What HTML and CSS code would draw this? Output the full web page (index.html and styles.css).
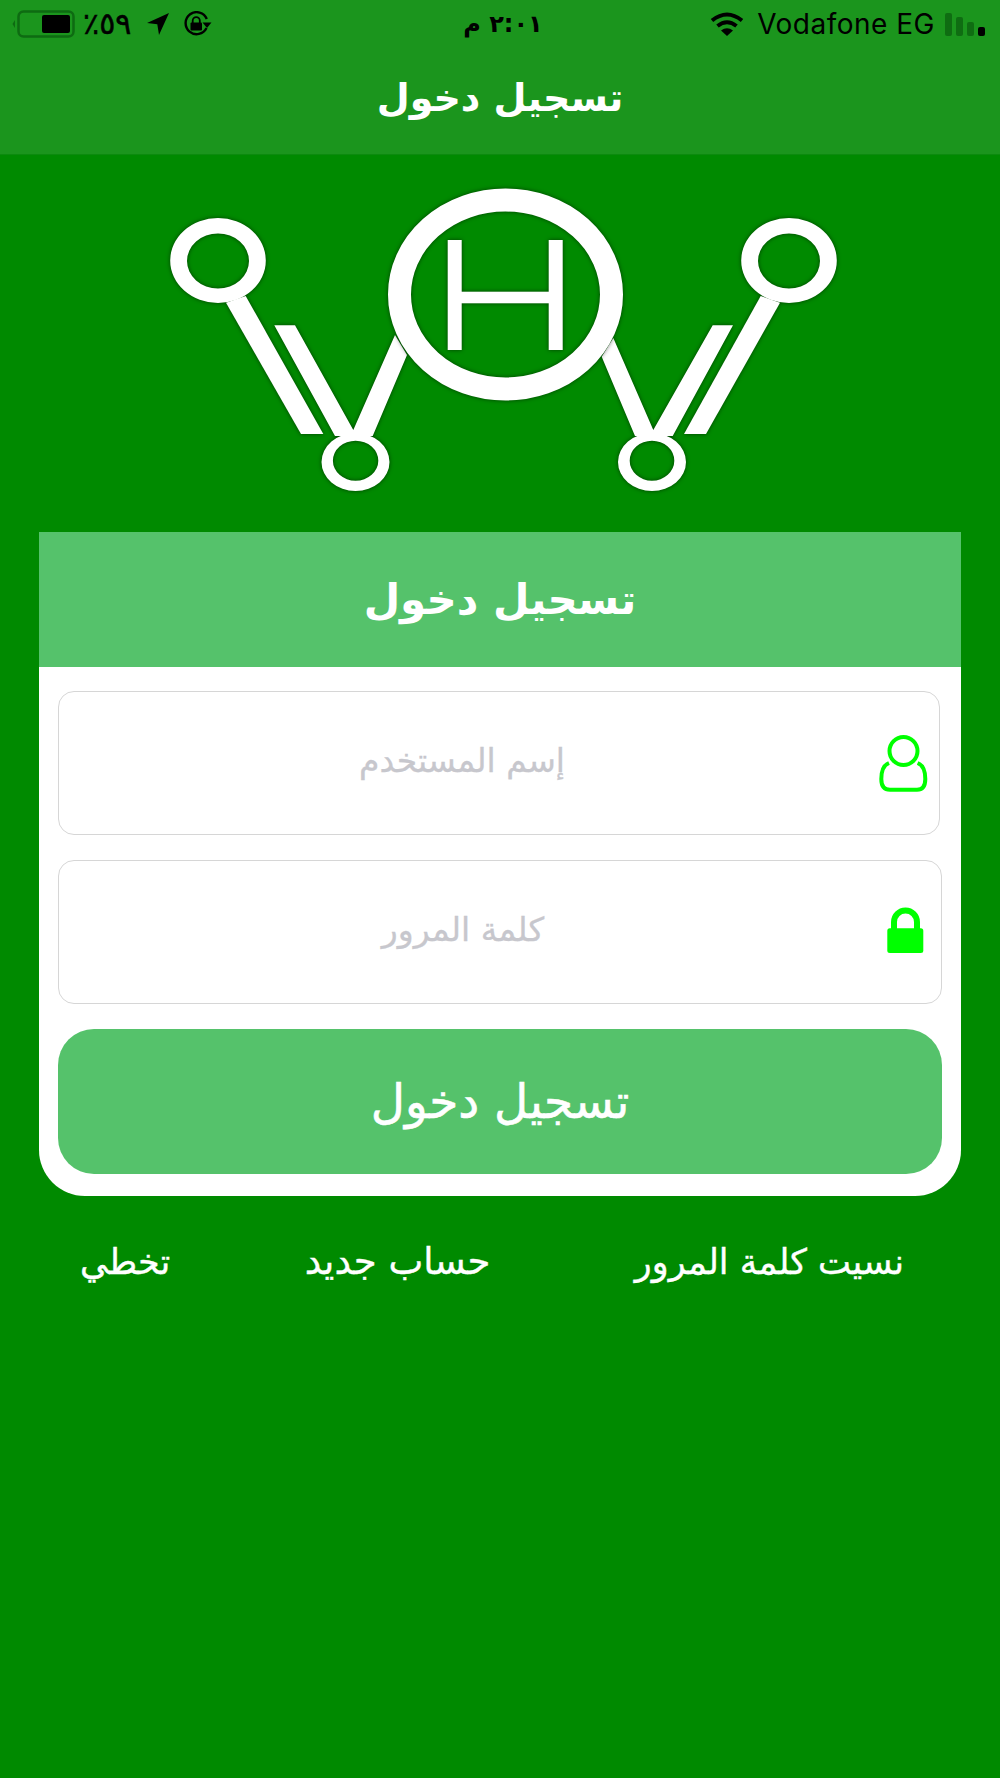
FILE: index.html
```html
<!DOCTYPE html>
<html lang="ar">
<head>
    <meta charset="UTF-8">
    <meta name="viewport" content="width=device-width, initial-scale=1.0">
    <title>تسجيل دخول</title>
    <link rel="stylesheet" href="styles.css">
</head>
<body>

<!-- Status bar and title -->
<header class="top-bar">
    <div class="status-bar">
        <div class="status-left">
            <svg class="battery" width="63" height="28" viewBox="0 0 63 28">
                <path d="M3 10 L0.5 14 L3 18 Z" fill="#0e6b12"/>
                <rect x="6.5" y="1.5" width="55" height="25" rx="5" fill="none" stroke="#0e6b12" stroke-width="2.5"/>
                <rect x="30" y="5" width="28" height="18" rx="2" fill="#000"/>
            </svg>
            <span class="percent" dir="rtl">٥٩٪</span>
            <svg class="arrow" width="24" height="24" viewBox="0 0 24 24">
                <path d="M23 1 L1 11 L11.300 12.300 L13 23 Z" fill="#000"/>
            </svg>
            <svg class="rotation" width="29" height="26" viewBox="0 0 29 26">
                <path d="M23.500 17 A11 11 0 1 1 23.800 8" fill="none" stroke="#000" stroke-width="2.400"/>
                <path d="M19.500 11.500 L28.500 11.500 L24 17 Z" fill="#000"/>
                <rect x="7.500" y="11.500" width="11.500" height="8" rx="1" fill="#000"/>
                <path d="M9.700 12 V9.700 A3.500 3.500 0 0 1 16.800 9.700 V12" fill="none" stroke="#000" stroke-width="1.800"/>
            </svg>
        </div>
        <span class="clock" dir="rtl">٢:٠١ م</span>
        <div class="status-right">
            <svg class="wifi" width="34" height="24" viewBox="0 0 34 24">
                <path d="M2 8.500 Q17 -3.500 32 8.500" fill="none" stroke="#000" stroke-width="4"/>
                <path d="M7.500 14 Q17 6.500 26.500 14" fill="none" stroke="#000" stroke-width="4"/>
                <path d="M11 18.500 Q17 14 23 18.500 L17 24 Z" fill="#000"/>
            </svg>
            <span class="carrier">Vodafone EG</span>
            <div class="signal">
                <i class="bar bar-1"></i>
                <i class="bar bar-2"></i>
                <i class="bar bar-3"></i>
                <i class="bar bar-4"></i>
            </div>
        </div>
    </div>
    <h1 class="nav-title">تسجيل دخول</h1>
</header>

<!-- Logo -->
<svg class="logo" width="1000" height="377" viewBox="0 155 1000 377">
    <g fill="#fff">
        <path d="M226 302.700 L245.700 296 L323.300 434 L301 434 Z"/>
        <path d="M274.300 325.300 L295 325.300 L353.300 430 L395 335 L407 355 L372.700 436 L335 436 Z"/>
        <path d="M780 302.700 L760.700 296 L684 434 L706 434 Z"/>
        <path d="M733 325.300 L712.700 325.300 L653.300 430 L613.300 338 L601.700 356.700 L635 436 L672.700 436 Z"/>
        <!-- rings: outer and inner ellipse are not concentric -->
        <path fill-rule="evenodd" d="M170.200 260.500 a47.800 42.500 0 1 0 95.600 0 a47.800 42.500 0 1 0 -95.600 0 Z M187 261 a31 27.500 0 1 0 62 0 a31 27.500 0 1 0 -62 0 Z"/>
        <path fill-rule="evenodd" d="M741.200 260.500 a47.800 42.500 0 1 0 95.600 0 a47.800 42.500 0 1 0 -95.600 0 Z M758 261 a31 27.500 0 1 0 62 0 a31 27.500 0 1 0 -62 0 Z"/>
        <path fill-rule="evenodd" d="M321.500 462 a34 29 0 1 0 68 0 a34 29 0 1 0 -68 0 Z M332.900 460.700 a22.700 20 0 1 0 45.400 0 a22.700 20 0 1 0 -45.400 0 Z"/>
        <path fill-rule="evenodd" d="M618 462 a34 29 0 1 0 68 0 a34 29 0 1 0 -68 0 Z M629.700 460.700 a22.300 20 0 1 0 44.600 0 a22.300 20 0 1 0 -44.600 0 Z"/>
    </g>
    <g>
        <ellipse cx="505.500" cy="294.500" rx="106" ry="94.500" fill="none" stroke="#fff" stroke-width="23"/>
        <g fill="#fff">
            <rect x="447.700" y="240" width="14" height="110"/>
            <rect x="548.700" y="240" width="14" height="110"/>
            <rect x="461" y="291.700" width="88" height="11.600"/>
        </g>
    </g>
</svg>

<!-- Login card -->
<main class="card">
    <h2 class="card-title">تسجيل دخول</h2>
    <div class="card-body">
        <div class="field field-user">
            <svg class="field-icon" width="74" height="60" viewBox="0 0 74 60">
                <path d="M24 30 C19 32 16.300 38 16.300 46 C16.300 52 18 56.700 25 56.700 H52 C58.500 56.700 60.300 52 60.300 46 C60.300 38 57.600 32 52.600 30" fill="none" stroke="#00ff00" stroke-width="4"/>
                <circle cx="38.500" cy="18" r="14" fill="#fff" stroke="#00ff00" stroke-width="4"/>
            </svg>
            <span class="placeholder">إسم المستخدم</span>
        </div>
        <div class="field">
            <svg class="field-icon" width="74" height="60" viewBox="0 0 74 60">
                <path d="M27 28 V20 A11.500 11.500 0 0 1 50 20 V28" fill="none" stroke="#00ff00" stroke-width="6"/>
                <rect x="20.300" y="26.300" width="36" height="24.700" rx="2.500" fill="#00ff00"/>
            </svg>
            <span class="placeholder">كلمة المرور</span>
        </div>
        <button class="login-button">تسجيل دخول</button>
    </div>
</main>

<!-- Links under the card -->
<nav class="links">
    <a class="link">نسيت كلمة المرور</a>
    <a class="link link-new">حساب جديد</a>
    <a class="link">تخطي</a>
</nav>

</body>
</html>
```

FILE: styles.css
```css
body {
    margin: 0;
    padding: 0;
    height: 1778px;
    overflow: hidden;
    font-family: "DejaVu Sans", "Noto Sans", sans-serif;
    color: #fff;
    background-color: #008a00;
}

.top-bar {
    height: 154px;
    background-color: #1b951d;
    border-bottom: 1px solid #0c8a0e;
}

.status-bar {
    display: grid;
    grid-template-columns: 1fr auto 1fr;
    align-items: center;
    height: 48px;
    color: #000;
}

.status-left {
    display: flex;
    align-items: center;
    padding-left: 12px;
}

.percent {
    margin-left: 8px;
    font-size: 30px;
    line-height: 34px;
    -webkit-text-stroke: 0.5px #000;
}

.arrow {
    margin-left: 15px;
}

.rotation {
    margin-left: 13px;
}

.clock {
    font-size: 24px;
    font-weight: bold;
    margin-left: 6px;
}

.status-right {
    display: flex;
    align-items: center;
    justify-content: flex-end;
    padding-right: 15px;
}

.carrier {
    margin-left: 13px;
    font-family: Inter, "Liberation Sans", sans-serif;
    font-size: 28px;
    letter-spacing: 0.5px;
}

.signal {
    display: flex;
    align-items: flex-end;
    gap: 4px;
    height: 24px;
    margin-left: 10px;
}

.bar {
    display: block;
    width: 7px;
    border-radius: 2px;
    background-color: #0f6d12;
}

.bar-1 { height: 23px; }
.bar-2 { height: 19px; }
.bar-3 { height: 14px; }
.bar-4 { height: 9px; background-color: #000; }

.nav-title {
    margin: 0;
    padding-top: 26px;
    font-size: 38px;
    font-weight: bold;
    line-height: 48px;
    text-align: center;
}

.logo {
    display: block;
}

.logo > g {
    filter: drop-shadow(0 0 2px rgba(0, 0, 0, 0.55));
}

.card {
    margin: 0 39px;
}

.card-title {
    margin: 0;
    height: 135px;
    background-color: #55c26b;
    font-size: 42px;
    font-weight: bold;
    line-height: 135px;
    text-align: center;
}

.card-body {
    display: flex;
    flex-direction: column;
    gap: 25px;
    padding: 24px 19px 22px;
    background-color: #fff;
    border-radius: 0 0 46px 46px;
}

.field {
    display: flex;
    flex-direction: row-reverse;
    align-items: center;
    height: 142px;
    border: 1px solid #d6d6d6;
    border-radius: 16px;
}

.field-user {
    margin-right: 2px;
}

.field-icon {
    flex-shrink: 0;
}

.placeholder {
    flex: 1;
    padding-bottom: 5px;
    color: #c7c7cd;
    font-size: 33px;
    -webkit-text-stroke: 0.3px #c7c7cd;
    text-align: center;
}

.login-button {
    height: 145px;
    padding: 0;
    border: none;
    border-radius: 36px;
    background-color: #55c26b;
    color: #fff;
    font-family: inherit;
    font-size: 47px;
    -webkit-text-stroke: 0.6px #fff;
}

.links {
    display: flex;
    justify-content: space-between;
    padding: 44px 96px 0 80px;
    direction: rtl;
}

.link {
    font-size: 35px;
    line-height: 44px;
    -webkit-text-stroke: 0.4px #fff;
}

.link-new {
    margin-right: 10px;
    font-size: 37px;
}
```
